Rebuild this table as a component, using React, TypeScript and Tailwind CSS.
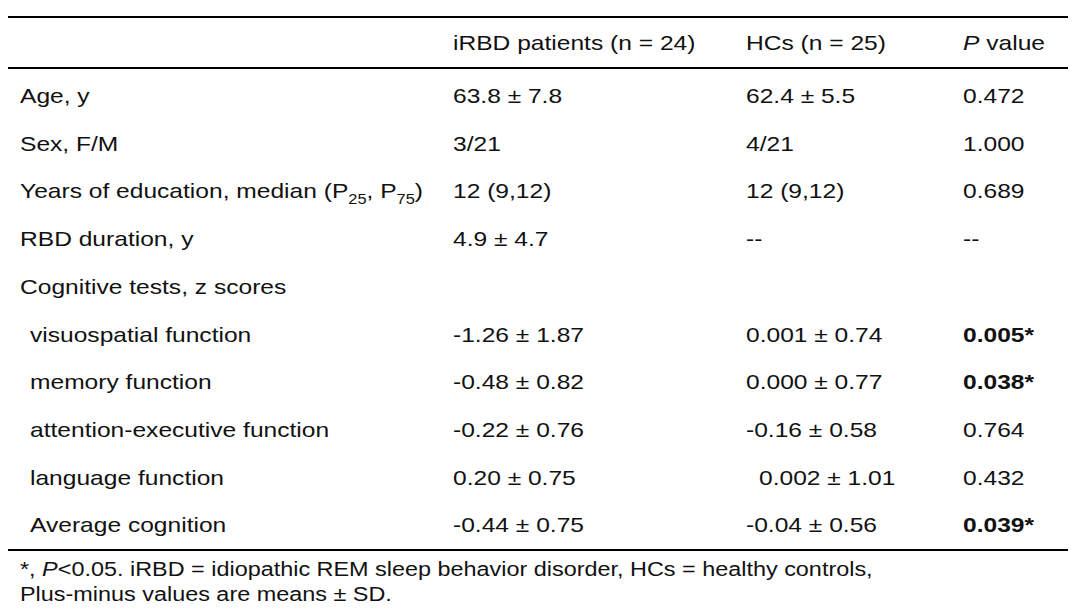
import React from 'react';

type Row = {
  label: React.ReactNode;
  irbd?: string;
  hc?: string;
  p?: string;
  sub?: boolean;
  bold?: boolean;
  hcIndent?: boolean;
};

// glyphs in the source are a little wider than Arial, so stretch each cell's text
const T = ({ children }: { children?: React.ReactNode }) => (
  <span className="inline-block origin-left scale-x-[1.17] whitespace-nowrap">{children}</span>
);

const rows: Row[] = [
  { label: 'Age, y', irbd: '63.8 ± 7.8', hc: '62.4 ± 5.5', p: '0.472' },
  { label: 'Sex, F/M', irbd: '3/21', hc: '4/21', p: '1.000' },
  {
    label: (
      <>
        Years of education, median (P<sub className="text-[14px] align-[-2px]">25</sub>, P
        <sub className="text-[14px] align-[-2px]">75</sub>)
      </>
    ),
    irbd: '12 (9,12)',
    hc: '12 (9,12)',
    p: '0.689',
  },
  { label: 'RBD duration, y', irbd: '4.9 ± 4.7', hc: '--', p: '--' },
  { label: 'Cognitive tests, z scores' },
  { label: 'visuospatial function', irbd: '-1.26 ± 1.87', hc: '0.001 ± 0.74', p: '0.005*', sub: true, bold: true },
  { label: 'memory function', irbd: '-0.48 ± 0.82', hc: '0.000 ± 0.77', p: '0.038*', sub: true, bold: true },
  { label: 'attention-executive function', irbd: '-0.22 ± 0.76', hc: '-0.16 ± 0.58', p: '0.764', sub: true },
  { label: 'language function', irbd: '0.20 ± 0.75', hc: '0.002 ± 1.01', p: '0.432', sub: true, hcIndent: true },
  { label: 'Average cognition', irbd: '-0.44 ± 0.75', hc: '-0.04 ± 0.56', p: '0.039*', sub: true, bold: true },
];

const cols = 'grid grid-cols-[445px_293px_217px_1fr] items-center';

export default function App() {
  return (
    <div className="w-[1078px] h-[616px] overflow-hidden bg-white text-[#111] font-['Liberation_Sans',Arial,sans-serif] text-[21px] pt-[16px]">
      <div className="mx-[8px] w-[1060px]">
        <div className="border-t-2 border-black" />
        {/* header */}
        <div className={`${cols} h-[49px]`}>
          <div />
          <div>
            <T>iRBD patients (n = 24)</T>
          </div>
          <div>
            <T>HCs (n = 25)</T>
          </div>
          <div>
            <T>
              <i>P</i> value
            </T>
          </div>
        </div>
        <div className="border-t-2 border-black" />

        <div className="pt-[3px]">
          {rows.map((r, i) => (
            <div key={i} className={`${cols} h-[47.7px]`}>
              <div className={r.sub ? 'pl-[22px]' : 'pl-[12px]'}>
                <T>{r.label}</T>
              </div>
              <div>
                <T>{r.irbd}</T>
              </div>
              <div className={r.hcIndent ? 'pl-[13px]' : ''}>
                <T>{r.hc}</T>
              </div>
              <div className={r.bold ? 'font-bold' : ''}>
                <T>{r.p}</T>
              </div>
            </div>
          ))}
        </div>

        <div className="border-t-2 border-black" />
        <div className="leading-[25px] pt-[6px] pl-[12px] text-[20px]">
          <div>
            <T>
              *, <i>P</i>&lt;0.05. iRBD = idiopathic REM sleep behavior disorder, HCs = healthy controls,
            </T>
          </div>
          <div>
            <T>Plus-minus values are means ± SD.</T>
          </div>
        </div>
      </div>
    </div>
  );
}
